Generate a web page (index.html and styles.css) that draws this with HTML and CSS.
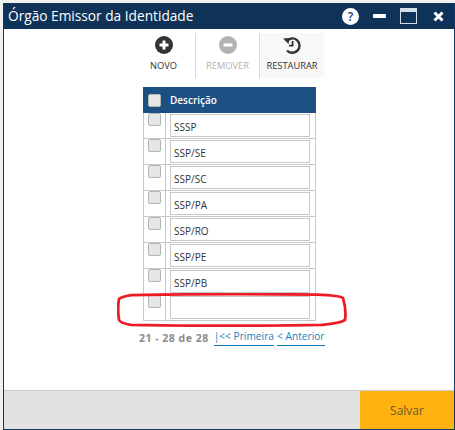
FILE: index.html
```html
<!DOCTYPE html>
<html lang="pt">
<head>
    <meta charset="UTF-8">
    <title>Órgão Emissor da Identidade</title>
    <link rel="stylesheet" href="styles.css">
</head>
<body>
    <div class="window">
        <div class="title-bar">
            <span class="title">Órgão Emissor da Identidade</span>
            <div class="window-icons">
                <svg class="icon-help" width="17" height="17" viewBox="0 0 17 17"><circle cx="8.5" cy="8.5" r="8.5" fill="#fff"/><text x="8.5" y="13" text-anchor="middle" class="help-mark">?</text></svg>
                <svg class="icon-min" width="13" height="4" viewBox="0 0 13 4"><rect width="13" height="4" rx="1" fill="#fff"/></svg>
                <svg class="icon-max" width="17" height="16" viewBox="0 0 17 16"><rect x="0.5" y="0.5" width="16" height="15" fill="none" stroke="#d5dde5"/><rect x="1" y="1" width="15" height="3" fill="#d5dde5"/></svg>
                <svg class="icon-close" width="11" height="11" viewBox="0 0 11 11"><path d="M1.5 1.5l8 8M9.5 1.5l-8 8" stroke="#fff" stroke-width="3"/></svg>
            </div>
        </div>

        <div class="content">
            <div class="toolbar">
                <div class="tool">
                    <svg width="18" height="18" viewBox="0 0 18 18"><circle cx="9" cy="9" r="9" fill="#333"/><path d="M9 4.5v9M4.5 9h9" stroke="#fff" stroke-width="3"/></svg>
                    <span>NOVO</span>
                </div>
                <div class="tool disabled">
                    <svg width="18" height="18" viewBox="0 0 18 18"><circle cx="9" cy="9" r="9" fill="#b3b3b3"/><path d="M4.5 9h9" stroke="#fff" stroke-width="3"/></svg>
                    <span>REMOVER</span>
                </div>
                <div class="tool hovered">
                    <svg width="18" height="18" viewBox="0 0 18 18"><path d="M3.6 5.2A7.2 7.2 0 1 1 4 14.5" fill="none" stroke="#333" stroke-width="2.4"/><path d="M0 2.4l6.6-.4-1 6z" fill="#333"/><path d="M9.6 5v4.6H6" fill="none" stroke="#333" stroke-width="1.8"/></svg>
                    <span>RESTAURAR</span>
                </div>
            </div>

            <div class="grid">
                <div class="grid-head">
                    <span class="check"></span>
                    <span class="grid-title">Descrição</span>
                </div>
                <div class="grid-row"><div class="cell-check"><span class="check"></span></div><div class="cell-input"><div class="input">SSSP</div></div></div>
                <div class="grid-row"><div class="cell-check"><span class="check"></span></div><div class="cell-input"><div class="input">SSP/SE</div></div></div>
                <div class="grid-row"><div class="cell-check"><span class="check"></span></div><div class="cell-input"><div class="input">SSP/SC</div></div></div>
                <div class="grid-row"><div class="cell-check"><span class="check"></span></div><div class="cell-input"><div class="input">SSP/PA</div></div></div>
                <div class="grid-row"><div class="cell-check"><span class="check"></span></div><div class="cell-input"><div class="input">SSP/RO</div></div></div>
                <div class="grid-row"><div class="cell-check"><span class="check"></span></div><div class="cell-input"><div class="input">SSP/PE</div></div></div>
                <div class="grid-row"><div class="cell-check"><span class="check"></span></div><div class="cell-input"><div class="input">SSP/PB</div></div></div>
                <div class="grid-row"><div class="cell-check"><span class="check"></span></div><div class="cell-input"><div class="input"></div></div></div>
            </div>

            <div class="pager">
                <span class="pager-count">21 - 28 de 28</span>
                <a class="pager-link first">|&lt;&lt; Primeira</a>
                <a class="pager-link">&lt; Anterior</a>
            </div>
        </div>

        <div class="footer">
            <div class="save">Salvar</div>
        </div>

        <svg class="red-mark" width="230" height="34" viewBox="0 0 232 34"><path d="M14 2C70 1 160 1 201 1.500C215 2 226 3 228 5C230 12 231 21 230 27C226 30 218 31 207 32C150 33 70 33 14 32C8 31 3 30 2 27C1 20 1 12 2 6C4 4 8 3 14 2Z" fill="none" stroke="#ed1c24" stroke-width="2.800"/></svg>
    </div>
</body>
</html>
```

FILE: styles.css
```css
html, body {
    margin: 0;
    padding: 0;
    background-color: #f0f0f0;
}

body {
    width: 455px;
    height: 430px;
    overflow: hidden;
    font-family: 'Open Sans', sans-serif;
}

.window {
    position: relative;
    display: flex;
    flex-direction: column;
    box-sizing: border-box;
    width: 452px;
    height: 427px;
    margin: 3px 0 0 3px;
    border: 1px solid #123a63;
    border-top: none;
    background-color: #fff;
}

.title-bar {
    display: flex;
    justify-content: space-between;
    align-items: center;
    height: 26px;
    padding: 0 10px 0 4px;
    background-color: #0f3358;
    color: #fff;
}

.title {
    margin-top: -2px;
    font-size: 13.7px;
}

.window-icons {
    display: flex;
    align-items: center;
}

.icon-min {
    margin-left: 14px;
}

.icon-max {
    margin-left: 14px;
}

.icon-close {
    margin-left: 16px;
}

.help-mark {
    font-size: 12px;
    font-weight: 600;
    fill: #1c3f63;
}

.content {
    flex: 1;
}

.toolbar {
    display: flex;
    justify-content: center;
    height: 45px;
    padding: 4px 2px 0 0;
}

.tool {
    display: flex;
    flex-direction: column;
    align-items: center;
    box-sizing: border-box;
    width: 64px;
    padding-top: 3px;
    border-right: 1px solid #d9d9d9;
    font-size: 9.3px;
    color: #333;
}

.tool span {
    margin-top: 5px;
}

.tool.disabled {
    color: #b3b3b3;
}

.tool.hovered {
    border-right: none;
    background-color: #f8f8f8;
}

.grid {
    width: 173px;
    margin: 9px 0 0 139px;
}

.grid-head {
    display: flex;
    align-items: center;
    height: 26px;
    padding-left: 5px;
    background-color: #1d5082;
}

.grid-title {
    margin-left: 9px;
    font-size: 10px;
    font-weight: 600;
    color: #fff;
}

.check {
    display: block;
    box-sizing: border-box;
    width: 13px;
    height: 13px;
    border: 1px solid #b5b5b5;
    border-radius: 2px;
    background-color: #e6e6e6;
}

.grid-row {
    display: flex;
    height: 26px;
    box-sizing: border-box;
    border: 1px solid #c8c8c8;
    border-top: none;
}

.cell-check {
    width: 22px;
    padding: 0 0 0 4px;
    box-sizing: border-box;
    border-right: 1px solid #c8c8c8;
}

.cell-input {
    flex: 1;
    padding: 1px 5px 0 4px;
}

.input {
    box-sizing: border-box;
    height: 23px;
    padding: 4px 0 0 3px;
    border: 1px solid #c8c8c8;
    font-size: 10px;
    line-height: 16px;
    color: #333;
}

.pager {
    display: flex;
    align-items: center;
    margin: 8px 0 0 135px;
    font-size: 10.5px;
}

.pager-count {
    font-weight: 700;
    color: #8a8a8a;
    letter-spacing: 0.5px;
}

.pager-link {
    margin-left: 3px;
    padding-bottom: 2px;
    border-bottom: 1px solid #0a7ab8;
    font-size: 10.2px;
    color: #1b7fb8;
}

.pager-link.first {
    margin-left: 5px;
}

.footer {
    display: flex;
    justify-content: flex-end;
    height: 38px;
    border-top: 1px solid #cccccc;
    background-color: #e2e2e2;
}

.save {
    display: flex;
    justify-content: center;
    align-items: center;
    width: 94px;
    background-color: #ffb210;
    font-size: 12px;
    color: #6b5a2a;
}

.red-mark {
    position: absolute;
    left: 113px;
    top: 290px;
}
```
